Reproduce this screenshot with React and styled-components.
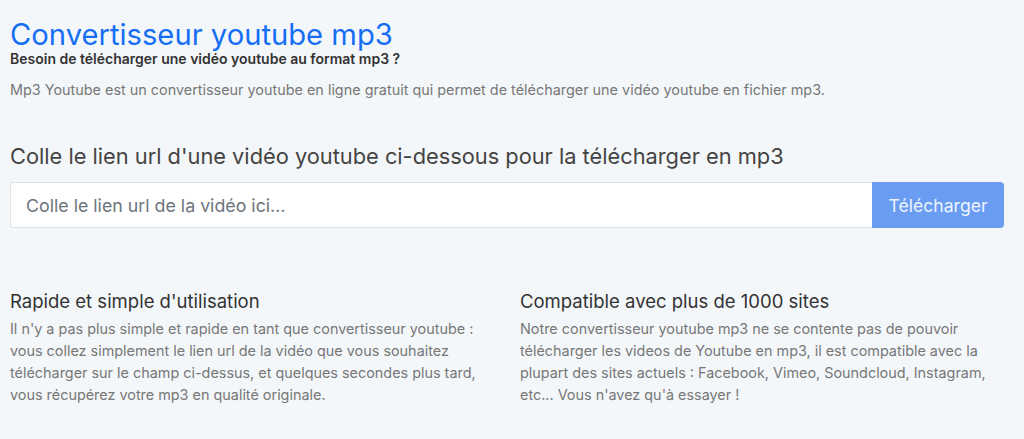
import React from 'react';
import styled, { createGlobalStyle } from 'styled-components';

const GlobalStyle = createGlobalStyle`
  body {
    margin: 0;
    background: #f4f7fa;
    font-family: Inter, "Liberation Sans", Arial, sans-serif;
  }
`;

const Page = styled.main`
  padding: 16px 20px 20px 10px;
`;

const Title = styled.h1`
  margin: 0;
  font-size: 29.2px;
  line-height: 38px;
  font-weight: 400;
  color: #156ef4;
`;

const Subtitle = styled.h2`
  margin: -4px 0 0;
  font-size: 14px;
  line-height: 18px;
  font-weight: 600;
  color: #333;
`;

const Lead = styled.p`
  margin: 12px 0 0;
  font-size: 14.4px;
  line-height: 20px;
  color: #777;
`;

const SectionTitle = styled.h3`
  margin: 43px 0 0;
  font-size: 21.8px;
  line-height: 26px;
  font-weight: 400;
  color: #444;
`;

const InputGroup = styled.form`
  display: flex;
  margin-top: 13px;
  height: 46px;
`;

const UrlInput = styled.input`
  flex: 1;
  min-width: 0;
  box-sizing: border-box;
  border: 1px solid #dde2e6;
  border-right: none;
  border-radius: 4px 0 0 4px;
  background: #fff;
  padding: 0 15px;
  font-family: inherit;
  font-size: 17.8px;
  color: #333;
  outline: none;

  &::placeholder {
    color: #6c757d;
  }
`;

const Button = styled.button`
  width: 132px;
  border: none;
  border-radius: 0 4px 4px 0;
  background: #6a9cf1;
  color: #eef4ff;
  font-family: inherit;
  font-size: 17.6px;
`;

const Features = styled.section`
  display: grid;
  grid-template-columns: 1fr 1fr;
  column-gap: 26px;
  margin-top: 62px;
`;

const FeatureTitle = styled.h4`
  margin: 0;
  font-size: 18.5px;
  line-height: 22px;
  font-weight: 400;
  color: #333;
`;

const FeatureText = styled.p`
  margin: 6px 0 0;
  font-size: 14.4px;
  line-height: 22px;
  color: #777;
`;

const features = [
  {
    title: "Rapide et simple d'utilisation",
    text: "Il n'y a pas plus simple et rapide en tant que convertisseur youtube : vous collez simplement le lien url de la vidéo que vous souhaitez télécharger sur le champ ci-dessus, et quelques secondes plus tard, vous récupérez votre mp3 en qualité originale.",
  },
  {
    title: 'Compatible avec plus de 1000 sites',
    text: "Notre convertisseur youtube mp3 ne se contente pas de pouvoir télécharger les videos de Youtube en mp3, il est compatible avec la plupart des sites actuels : Facebook, Vimeo, Soundcloud, Instagram, etc... Vous n'avez qu'à essayer !",
  },
];

const App = () => (
  <>
    <GlobalStyle />
    <Page>
      <Title>Convertisseur youtube mp3</Title>
      <Subtitle>Besoin de télécharger une vidéo youtube au format mp3 ?</Subtitle>
      <Lead>
        Mp3 Youtube est un convertisseur youtube en ligne gratuit qui permet de télécharger une vidéo youtube en fichier mp3.
      </Lead>
      <SectionTitle>Colle le lien url d'une vidéo youtube ci-dessous pour la télécharger en mp3</SectionTitle>
      <InputGroup onSubmit={(e) => e.preventDefault()}>
        <UrlInput type="text" placeholder="Colle le lien url de la vidéo ici..." />
        <Button type="submit" disabled>Télécharger</Button>
      </InputGroup>
      <Features>
        {features.map((f) => (
          <div key={f.title}>
            <FeatureTitle>{f.title}</FeatureTitle>
            <FeatureText>{f.text}</FeatureText>
          </div>
        ))}
      </Features>
    </Page>
  </>
);

export default App;
